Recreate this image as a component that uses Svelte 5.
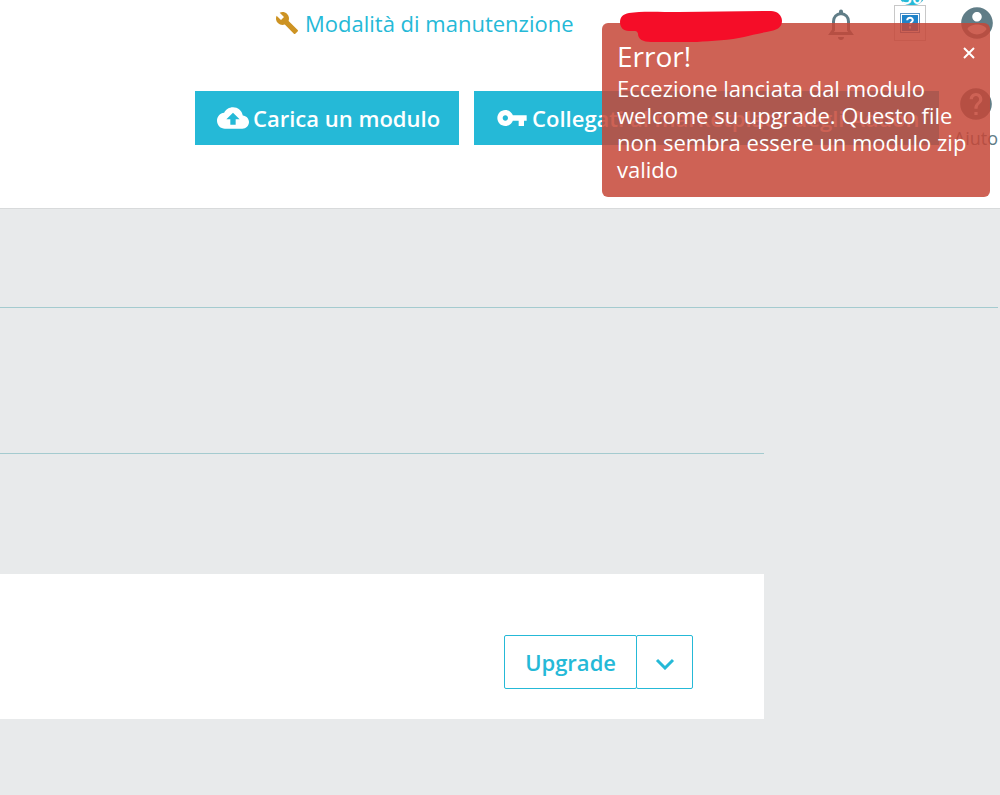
<script>
  let toastOpen = $state(true);
  let menuOpen = $state(false);
</script>

<div class="page">
  <header>
    <div class="topbar">
      <a class="maintenance" href="#maintenance">
        <svg width="24" height="24" viewBox="0 0 24 24" aria-hidden="true">
          <path d="M22.7 19l-9.1-9.1c.9-2.3.4-5-1.5-6.9-2-2-5-2.4-7.4-1.3L9 6 6 9 1.600 4.700C.4 7.100.9 10.100 2.900 12.100c1.900 1.900 4.600 2.400 6.900 1.500l9.100 9.100c.4.4 1 .4 1.400 0l2.300-2.300c.5-.4.5-1.100.1-1.400z" />
        </svg>
        Modalità di manutenzione
      </a>

      <nav class="user_icons">
        <button class="icon_button bell" aria-label="Notifiche">
          <svg width="26" height="32" viewBox="0 0 26 32" aria-hidden="true">
            <path d="M13 4.500C8.500 5 5.500 8 5.500 12.500V21L3 24.500H23L20.500 21V12.500C20.500 8 17.500 5 13 4.500Z" fill="none" stroke="currentColor" stroke-width="3" />
            <path d="M11 2.500a2 2 0 0 1 4 0V5h-4zM10 28h6c0 2-1.300 3-3 3s-3-1-3-3z" fill="currentColor" />
          </svg>
        </button>
        <div class="missing">
          <span class="badge">30</span>
          <svg width="20" height="20" viewBox="0 0 20 20" aria-hidden="true">
            <path d="M0 0h20v20H0z" fill="#5b93c4" />
            <path d="M1 1h18v18H1z" fill="#fff" />
            <path d="M2 2h16v16H2z" fill="#1f83c9" />
            <path d="M7.200 7.300C7.200 3.800 13 4 12.800 7.300C12.700 9 10 9.200 10 11.700M10 13.300V15.500" fill="none" stroke="#fff" stroke-width="2" />
          </svg>
        </div>
        <button class="icon_button" aria-label="Profilo">
          <svg width="38" height="38" viewBox="0 0 24 24" aria-hidden="true">
            <path fill="currentColor" d="M12 2C6.480 2 2 6.480 2 12s4.480 10 10 10 10-4.480 10-10S17.520 2 12 2zm0 3c1.660 0 3 1.340 3 3s-1.340 3-3 3-3-1.340-3-3 1.340-3 3-3zm0 14.200c-2.500 0-4.710-1.280-6-3.220.030-1.990 4-3.080 6-3.080 1.990 0 5.970 1.090 6 3.080-1.290 1.940-3.500 3.220-6 3.220z" />
          </svg>
        </button>
      </nav>
    </div>

    <div class="toolbar">
      <button class="primary">
        <svg width="32" height="32" viewBox="0 0 24 24" aria-hidden="true">
          <path fill="currentColor" d="M19.350 10.040C18.670 6.590 15.640 4 12 4 9.110 4 6.600 5.640 5.350 8.040 2.340 8.360 0 10.910 0 14c0 3.310 2.690 6 6 6h13c2.760 0 5-2.240 5-5 0-2.640-2.050-4.780-4.650-4.960zM14 13v4h-4v-4H7l5-5 5 5h-3z" />
        </svg>
        Carica un modulo
      </button>
      <button class="primary">
        <svg width="32" height="32" viewBox="0 0 24 24" aria-hidden="true">
          <path fill="currentColor" d="M12.650 10C11.830 7.670 9.610 6 7 6c-3.310 0-6 2.690-6 6s2.690 6 6 6c2.610 0 4.830-1.670 5.650-4H17v4h4v-4h2v-4H12.650zM7 14c-1.100 0-2-.9-2-2s.9-2 2-2 2 .9 2 2-.9 2-2 2z" />
        </svg>
        Collegati al marketplace degli Addon
      </button>
      <a class="help" href="#help">
        <svg width="38" height="38" viewBox="0 0 24 24" aria-hidden="true">
          <path fill="currentColor" d="M12 2C6.480 2 2 6.480 2 12s4.480 10 10 10 10-4.480 10-10S17.520 2 12 2zm1 17h-2v-2h2v2zm2.070-7.750l-.9.920C13.450 12.900 13 13.500 13 15h-2v-.5c0-1.100.45-2.100 1.170-2.830l1.240-1.260c.37-.36.59-.86.59-1.410 0-1.100-.9-2-2-2s-2 .9-2 2H8c0-2.210 1.790-4 4-4s4 1.790 4 4c0 .88-.36 1.680-.93 2.250z" />
        </svg>
        Aiuto
      </a>
    </div>
  </header>

  <main>
    <hr class="wide" />
    <hr />
    <section class="module">
      <div class="split">
        <button class="upgrade">Upgrade</button>
        <button
          class="toggle"
          aria-label="Altre azioni"
          aria-expanded={menuOpen}
          onclick={() => (menuOpen = !menuOpen)}
        >
          <svg width="20" height="12" viewBox="0 0 20 12" aria-hidden="true">
            <path d="M2 2L10 10L18 2" fill="none" stroke="currentColor" stroke-width="3" />
          </svg>
        </button>
      </div>
    </section>
  </main>

  {#if toastOpen}
    <div class="toast" role="alert">
      <button class="close" aria-label="Chiudi" onclick={() => (toastOpen = false)}>
        <svg width="12" height="12" viewBox="0 0 12 12" aria-hidden="true">
          <path d="M1 1L11 11M11 1L1 11" stroke="currentColor" stroke-width="2" />
        </svg>
      </button>
      <h2>Error!</h2>
      <p>Eccezione lanciata dal modulo welcome su upgrade. Questo file non sembra essere un modulo zip valido</p>
    </div>
  {/if}

  <svg class="scribble" width="164" height="34" viewBox="0 0 164 34" aria-hidden="true">
    <path d="M10 2C22 0 40 1 60 1L152 0C158 0 163 4 163 10C163 16 158 19 152 20C142 22 132 24 125 26C112 29 92 30 78 31H32C24 31 19 28 19 23C19 22 18 20 16 20H10C4 20 1 16 1 11C1 6 4 3 10 2Z" fill="#f50d28" />
  </svg>
</div>

<style>
  :global(body) {
    margin: 0;
    background: #e8eaeb;
  }

  .page {
    position: relative;
    overflow: hidden;
    min-height: 100vh;
    font-family: "Open Sans", sans-serif;
    font-size: 22px;
    color: #4e6167;
  }

  button {
    font: inherit;
    cursor: pointer;
  }

  svg {
    display: block;
    flex: none;
  }

  header {
    background: #fff;
    border-bottom: 1px solid #d8dadb;
  }

  .topbar {
    display: flex;
    align-items: center;
    justify-content: space-between;
    height: 46px;
    padding: 0 4px 0 275px;
  }

  .maintenance {
    display: flex;
    align-items: center;
    gap: 6px;
    color: #25b9d7;
    text-decoration: none;
  }

  .maintenance svg {
    fill: #cd9323;
  }

  .user_icons {
    display: flex;
    align-items: center;
    gap: 32px;
  }

  .icon_button {
    padding: 0;
    border: 0;
    background: none;
    color: #607d87;
  }

  .bell {
    padding: 4px 8px 0 0;
  }

  .missing {
    position: relative;
    display: flex;
    align-items: center;
    justify-content: center;
    width: 30px;
    height: 34px;
    border: 1px solid #c8c8c8;
  }

  .badge {
    position: absolute;
    top: -24px;
    left: 4px;
    width: 26px;
    height: 23px;
    border-radius: 11px;
    background: #25b9d7;
    color: #fff;
    font-size: 18px;
    font-weight: 600;
    line-height: 30px;
    text-align: center;
  }

  .toolbar {
    display: flex;
    align-items: flex-start;
    gap: 15px;
    padding: 45px 2px 63px 195px;
  }

  .primary {
    display: flex;
    flex: none;
    align-items: center;
    gap: 4px;
    height: 54px;
    padding: 0 19px 0 22px;
    border: 0;
    background: #25b9d7;
    color: #fff;
    font-weight: 600;
    white-space: nowrap;
  }

  .help {
    display: flex;
    flex-direction: column;
    align-items: center;
    gap: 3px;
    height: 54px;
    margin: -6px 0 0 auto;
    color: #607d87;
    font-size: 18px;
    text-decoration: none;
  }

  main {
    padding-top: 98px;
  }

  hr {
    height: 1px;
    margin: 0 236px 120px 0;
    border: 0;
    background: #a4cbcf;
  }

  .wide {
    margin: 0 2px 145px 0;
  }

  .module {
    display: flex;
    align-items: center;
    justify-content: flex-end;
    height: 145px;
    margin-right: 236px;
    padding-right: 71px;
    background: #fff;
  }

  .split {
    display: flex;
    height: 54px;
    margin-top: 30px;
    color: #25b9d7;
  }

  .upgrade,
  .toggle {
    display: flex;
    align-items: center;
    justify-content: center;
    padding: 0 20px;
    border: 1px solid #25b9d7;
    border-radius: 2px;
    background: #fff;
    color: inherit;
    font-weight: 600;
  }

  .toggle {
    width: 57px;
    margin-left: -1px;
    padding: 4px 0 0;
  }

  .toast {
    position: absolute;
    top: 23px;
    right: 10px;
    box-sizing: border-box;
    width: 388px;
    padding: 15px 15px 14px;
    border-radius: 6px;
    background: rgba(197, 71, 55, 0.85);
    color: #fff;
  }

  .toast h2 {
    margin: 0 0 1px;
    font-size: 28px;
    font-weight: 400;
    line-height: 36px;
  }

  .toast p {
    margin: 0;
    line-height: 27px;
  }

  .close {
    float: right;
    margin-top: 9px;
    padding: 0;
    border: 0;
    background: none;
    color: #fff;
  }

  .scribble {
    position: absolute;
    top: 11px;
    right: 217px;
  }
</style>
